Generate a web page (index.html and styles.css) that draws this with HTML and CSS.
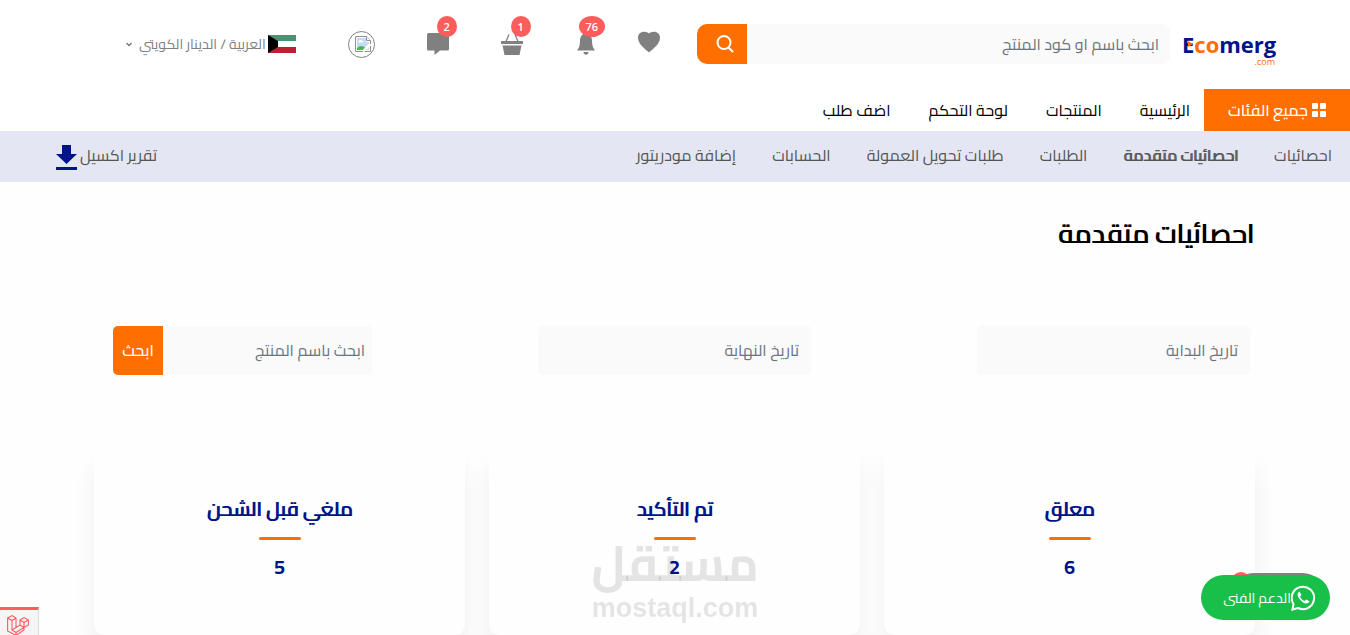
FILE: index.html
```html
<!DOCTYPE html>
<html lang="ar" dir="rtl">
<head>
  <meta charset="UTF-8">
  <meta name="viewport" content="width=device-width, initial-scale=1">
  <title>احصائيات متقدمة</title>
  <link rel="stylesheet" href="styles.css">
</head>
<body>

  <header class="header">
    <a class="logo" href="#" dir="ltr">
      <span class="logo-name">E<span class="logo-co">co</span>merg</span>
      <span class="logo-com">.com</span>
      <span class="logo-play"></span>
    </a>

    <form class="search">
      <input type="text" class="search-input" aria-label="بحث" placeholder="ابحث باسم او كود المنتج">
      <button type="submit" class="search-btn" aria-label="ابحث">
        <svg width="18" height="18" viewBox="0 0 18 18" fill="none" stroke="#fff" stroke-width="2"><circle cx="8" cy="7.500" r="6.500"/><path d="M12.500 12.500L17 17"/></svg>
      </button>
    </form>

    <div class="icons">
      <a href="#" class="icon heart" aria-label="المفضلة">
        <svg width="22" height="22" viewBox="0 0 22 22" fill="#808080"><path d="M11 21.500C8 18.500 0 13.500 0 7C0 3 2.500 .8 6 .8C8.300 .8 10 1.500 11 2.600C12 1.500 13.700 .8 16 .8C19.500 .8 22 3 22 7C22 13.500 14 18.500 11 21.500Z"/></svg>
      </a>
      <a href="#" class="icon" aria-label="الاشعارات">
        <svg width="22" height="22" viewBox="0 0 22 22" fill="#808080"><path d="M11 0C6.500 1 5 4 5 8C5 12.500 4 15 2 17.500H20C18 15 17 12.500 17 8C17 4 15.500 1 11 0ZM8.500 19H13.500C13.500 22.500 8.500 22.500 8.500 19Z"/></svg>
        <span class="badge badge-wide">76</span>
      </a>
      <a href="#" class="icon" aria-label="السلة">
        <svg width="22" height="22" viewBox="0 0 22 22"><path d="M0 8H22V11H0ZM1.500 12.500H20.500L18.500 22H3.500Z" fill="#808080"/><path d="M5 8.500L8 1.500M17 8.500L14 1.500" stroke="#808080" stroke-width="1.300"/></svg>
        <span class="badge">1</span>
      </a>
      <a href="#" class="icon" aria-label="الرسائل">
        <svg width="22" height="22" viewBox="0 0 22 22" fill="#808080"><path d="M1.500 0H20.500Q22 0 22 1.500V16Q22 17.500 20.500 17.500H13L7.500 22V17.500H1.500Q0 17.500 0 16V1.500Q0 0 1.500 0Z"/></svg>
        <span class="badge">2</span>
      </a>
      <a href="#" class="avatar" aria-label="الحساب">
        <svg width="16" height="16" viewBox="0 0 16 16"><path d="M.5 .5H11.500L15.500 4.500V15.500H.5Z" fill="#fff" stroke="#8f8f96"/><path d="M2 2H11V6H14V14H2Z" fill="#c3dcf5"/><path d="M3.500 6C3.500 4 6 3.500 6.500 4.500C8 4 9 6 8 6.500H4Z" fill="#fff"/><path d="M2 14V12C5 9 9 9 12 14Z" fill="#4db848"/><path d="M8 15.500L15.500 8" stroke="#fff" stroke-width="2.500"/><path d="M11.500 .5V4.500H15.500" fill="#fff" stroke="#8f8f96"/></svg>
      </a>
    </div>

    <button type="button" class="lang">
      <svg width="28" height="18" viewBox="0 0 28 18"><path fill="#fff" d="M0 0H28V18H0Z"/><path fill="#449672" d="M0 0H28V6H0Z"/><path fill="#bd1e32" d="M0 12H28V18H0Z"/><path d="M0 0L10 6V12L0 18Z"/></svg>
      <span>العربية / الدينار الكويتي</span>
      <svg class="chevron" width="6" height="5" viewBox="0 0 6 5" fill="none" stroke="#6b7d6b" stroke-width="1.300"><path d="M.5 1L3 3.500L5.500 1"/></svg>
    </button>
  </header>

  <nav class="main-nav">
    <a href="#" class="all-categories">
      <svg width="14" height="14" viewBox="0 0 14 14" fill="#fff"><rect width="6" height="6" rx="1"/><rect x="8" width="6" height="6" rx="1"/><rect y="8" width="6" height="6" rx="1"/><rect x="8" y="8" width="6" height="6" rx="1"/></svg>
      جميع الفئات
    </a>
    <a href="#">الرئيسية</a>
    <a href="#">المنتجات</a>
    <a href="#">لوحة التحكم</a>
    <a href="#">اضف طلب</a>
  </nav>

  <nav class="sub-nav">
    <a href="#">احصائيات</a>
    <a href="#" class="active">احصائيات متقدمة</a>
    <a href="#">الطلبات</a>
    <a href="#">طلبات تحويل العمولة</a>
    <a href="#">الحسابات</a>
    <a href="#">إضافة مودريتور</a>
    <a href="#" class="excel">
      تقرير اكسيل
      <svg width="21" height="25" viewBox="0 0 21 25" fill="#001489"><path d="M6 0H15V9H21L10.500 19L0 9H6ZM0 22H21V25H0Z"/></svg>
    </a>
  </nav>

  <main>
    <h1>احصائيات متقدمة</h1>

    <form class="filters">
      <input type="text" class="date" aria-label="تاريخ البداية" placeholder="تاريخ البداية">
      <input type="text" class="date" aria-label="تاريخ النهاية" placeholder="تاريخ النهاية">
      <div class="product-search">
        <input type="text" aria-label="اسم المنتج" placeholder="ابحث باسم المنتج">
        <button type="submit">ابحث</button>
      </div>
    </form>

    <section class="cards">
      <div class="card">
        <h2>معلق</h2>
        <span class="line"></span>
        <p>6</p>
      </div>
      <div class="card">
        <h2>تم التأكيد</h2>
        <span class="line"></span>
        <p>2</p>
      </div>
      <div class="card">
        <h2>ملغي قبل الشحن</h2>
        <span class="line"></span>
        <p>5</p>
      </div>
    </section>
  </main>

  <div class="watermark">
    <span class="watermark-ar">مستقل</span>
    <span class="watermark-en">mostaql.com</span>
  </div>

  <div class="support">
    <span class="support-back"></span>
    <span class="support-dot"></span>
    <a href="#" class="whatsapp">
      <svg width="25" height="26" viewBox="0 0 25 26"><path d="M2.500 19A11.200 11.200 0 1 1 7 23L1.500 24.500Z" fill="none" stroke="#fff" stroke-width="2"/><path d="M8.500 6.500C6 8 6 11 9 14.500C12.500 18.500 16 20 18.500 16.500L15.500 14.500L13.500 16C11.500 15 10 13.500 9 11.500L10.500 10Z" fill="#fff"/></svg>
      <span>الدعم الفنى</span>
    </a>
  </div>

  <a href="#" class="debugbar" aria-label="Laravel">
    <svg width="22" height="22" viewBox="0 0 22 22" fill="none" stroke="#ff5a5f" stroke-width="1.100"><path d="M.6 3L5 .6L9 3V12.500L13 10V5L17 2.600L21.400 5V10L17 12.500V15L9 20.500L.6 16ZM.6 3L5 5.500L9 3M5 5.500V15L9 17.500L17 12.500M5 15L9 12.500M13 5L17 7.500L21.400 5M17 7.500V12.500L13 10M9 17.500V20.500"/></svg>
  </a>

</body>
</html>
```
FILE: styles.css
```css
* {
  box-sizing: border-box;
}

body {
  margin: 0;
  background: #fefefe;
  font-family: "Cairo", "DejaVu Sans Condensed", "DejaVu Sans", sans-serif;
  font-size: 16px;
  color: #000;
}

a {
  color: inherit;
  text-decoration: none;
}

input,
button {
  font-family: inherit;
  font-size: 16px;
  border: none;
  outline: none;
}

button {
  cursor: pointer;
}

svg {
  display: block;
  flex-shrink: 0;
}

input::placeholder {
  color: #6c757d;
  opacity: 1;
}

/* header */
.header {
  display: flex;
  align-items: center;
  height: 89px;
  padding: 0 75px 1px 126px;
  background: #fff;
}

.logo {
  position: relative;
  display: flex;
  flex-direction: column;
  width: 93px;
  margin-left: 12px;
  padding-top: 8px;
  color: #001489;
}

.logo-name {
  font: bold 22px/26px "Open Sans", sans-serif;
}

.logo-co {
  color: #ff6f00;
}

.logo-com {
  align-self: flex-end;
  font: 9px/9px "Open Sans", sans-serif;
  color: #ff6f00;
}

.logo-play {
  position: absolute;
  left: 6px;
  top: 18px;
  border: 3px solid transparent;
  border-left: 5px solid #ff6f00;
  border-right: 0;
}

.search {
  display: flex;
  flex: 1;
  height: 40px;
}

.search-input {
  flex: 1;
  min-width: 0;
  padding: 0 11px;
  background: #fafafa;
  border-radius: 0 8px 8px 0;
}

.search-btn {
  display: flex;
  align-items: center;
  width: 50px;
  padding: 0 13px;
  background: #ff6f00;
  border-radius: 10px 0 0 10px;
}

.icons {
  display: flex;
  align-items: center;
  gap: 52px;
  margin: 0 37px 0 52px;
}

.icon {
  position: relative;
}

.heart {
  margin-left: -11px;
  padding-bottom: 5px;
}

.badge {
  position: absolute;
  left: 10px;
  top: -17px;
  width: 20px;
  height: 21px;
  border-radius: 50%;
  background: #ff5c5c;
  color: #fff;
  font: 600 11px/21px "Open Sans", sans-serif;
  text-align: center;
}

.badge-wide {
  left: 4px;
  width: 26px;
}

.avatar {
  display: flex;
  align-items: center;
  justify-content: center;
  width: 27px;
  height: 27px;
  padding-left: 4px;
  border: 1px solid #808080;
  border-radius: 50%;
}

.lang {
  display: flex;
  align-items: center;
  gap: 2px;
  padding: 0;
  background: none;
  color: #808080;
  font-size: 14px;
  white-space: nowrap;
}

.chevron {
  margin-right: 5px;
}

/* nav */
.main-nav {
  display: flex;
  align-items: center;
  gap: 38px;
  height: 42px;
  background: #fff;
}

.all-categories {
  display: flex;
  align-items: center;
  justify-content: center;
  gap: 4px;
  width: 146px;
  height: 42px;
  margin-left: -24px;
  background: #ff6f00;
  color: #fff;
  font-weight: 500;
}

.sub-nav {
  display: flex;
  align-items: center;
  gap: 36px;
  height: 51px;
  padding: 0 18px 4px 56px;
  background: #e4e7f3;
  color: #555;
}

.active {
  text-shadow: 1px 0 currentColor;
}

.excel {
  display: flex;
  align-items: center;
  gap: 3px;
  margin-right: auto;
}

.excel svg {
  margin-top: 6px;
}

/* content */
h1 {
  margin: 0;
  padding: 30px 96px 0;
  font-size: 27px;
  font-weight: 500;
  line-height: 42px;
  text-shadow: 1px 0 currentColor;
}

.filters {
  display: flex;
  align-items: center;
  justify-content: space-between;
  padding: 71px 100px 0 113px;
}

.date {
  width: 273px;
  height: 50px;
  padding: 0 12px;
  background: #fafafa;
  border-radius: 5px;
}

.product-search {
  display: flex;
  width: 259px;
  height: 49px;
}

.product-search input {
  flex: 1;
  min-width: 0;
  padding: 0 7px;
  background: #fafafa;
  border-radius: 0 3px 3px 0;
}

.product-search button {
  width: 50px;
  padding: 0;
  background: #ff6f00;
  color: #fff;
  font-weight: 500;
  border-radius: 5px 0 0 5px;
}

.cards {
  display: grid;
  grid-template-columns: repeat(3, 1fr);
  gap: 24px;
  padding: 70px 95px 0 94px;
}

.card {
  display: flex;
  flex-direction: column;
  align-items: center;
  padding: 46px 20px 51px;
  background: #fefefe;
  border-radius: 10px;
  box-shadow: 0 20px 25px rgba(0, 0, 0, 0.06);
  color: #001489;
}

.card h2 {
  margin: 0;
  font-size: 20px;
  font-weight: 500;
  line-height: 36px;
  text-shadow: 1px 0 currentColor;
}

.line {
  width: 42px;
  height: 3px;
  margin: 10px 0;
  border-radius: 2px;
  background: #ff6f00;
}

.card p {
  margin: 0;
  font-size: 20px;
  font-weight: 700;
  line-height: 34px;
}

/* overlays */
.watermark {
  position: fixed;
  left: 50%;
  bottom: 12px;
  display: flex;
  flex-direction: column;
  align-items: center;
  width: 164px;
  margin-left: -82px;
  color: rgba(0, 0, 0, 0.1);
  pointer-events: none;
}

.watermark-ar {
  font: bold 49px/60px "Cairo", "DejaVu Sans", sans-serif;
}

.watermark-en {
  font: bold 27px/30px "Liberation Sans", Arial, sans-serif;
}

.support {
  position: fixed;
  right: 20px;
  bottom: 15px;
}

.support-back {
  position: absolute;
  right: 7px;
  top: -2px;
  width: 90px;
  height: 40px;
  border-radius: 20px;
  background: #808080;
}

.support-dot {
  position: absolute;
  right: 79px;
  top: -3px;
  width: 20px;
  height: 20px;
  border-radius: 50%;
  background: #ff5c5c;
}

.whatsapp {
  position: relative;
  display: flex;
  align-items: center;
  width: 129px;
  height: 45px;
  padding-right: 14px;
  border-radius: 23px;
  background: #18bf48;
  color: #fff;
  font-size: 14px;
  white-space: nowrap;
}

.debugbar {
  position: fixed;
  left: 0;
  bottom: 0;
  width: 39px;
  height: 28px;
  padding: 5px 7px 0;
  overflow: hidden;
  direction: ltr;
  background: #f5f5f5;
  border-top: 3px solid #ff5a5f;
  border-right: 1px solid #ddd;
}
```
